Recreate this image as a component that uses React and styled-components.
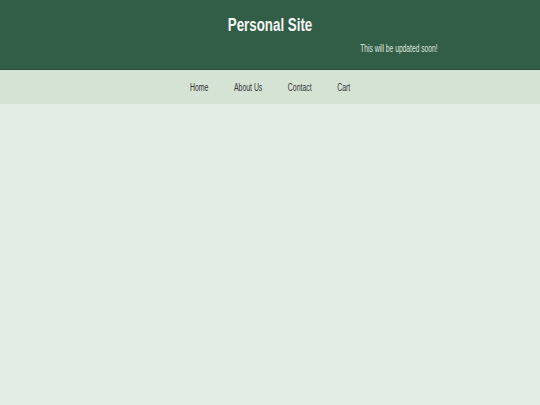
import styled, { createGlobalStyle } from "styled-components";

const GlobalStyle = createGlobalStyle`
	html, body {
		margin: 0;
		padding: 0;
		background-color: #e3ede4;
	}
	body {
		font-family: "Liberation Sans", Arial, sans-serif;
	}
`;

const links = ["Home", "About Us", "Contact", "Cart"];

export default function App() {
	return (
		<Page>
			<GlobalStyle />
			<Header>
				<Title>Personal Site</Title>
				<Tagline>This will be updated soon!</Tagline>
			</Header>
			<Nav>
				<NavList>
					{links.map((link) => (
						<NavLink key={link} href="#">
							{link}
						</NavLink>
					))}
				</NavList>
			</Nav>
		</Page>
	);
}

const Page = styled.div`
	min-height: 405px;
	background-color: #e3ede4;
`;

const Header = styled.header`
	height: 69px;
	background-color: #325e48;
	border-bottom: 1px solid #2a4f3c;
	display: flex;
	flex-direction: column;
	align-items: center;
`;

/* the text in this design is set in a narrow face */
const Title = styled.h1`
	margin: 13px 0 0;
	font-size: 18px;
	font-weight: bold;
	color: #f4f6f4;
	line-height: 24px;
	transform: scaleX(0.74);
`;

const Tagline = styled.p`
	margin: 5px 102px 0 0;
	align-self: flex-end;
	font-size: 10px;
	line-height: 14px;
	color: #dfe6df;
	transform: scaleX(0.67);
	transform-origin: right center;
`;

const Nav = styled.nav`
	height: 34px;
	background-color: #d5e3d5;
	display: flex;
	justify-content: center;
	align-items: center;
`;

const NavList = styled.div`
	display: flex;
	align-items: center;
	gap: 37px;
	margin-right: 0;
	transform: scaleX(0.69);
`;

const NavLink = styled.a`
	font-size: 10px;
	color: #333;
	text-decoration: none;
`;
